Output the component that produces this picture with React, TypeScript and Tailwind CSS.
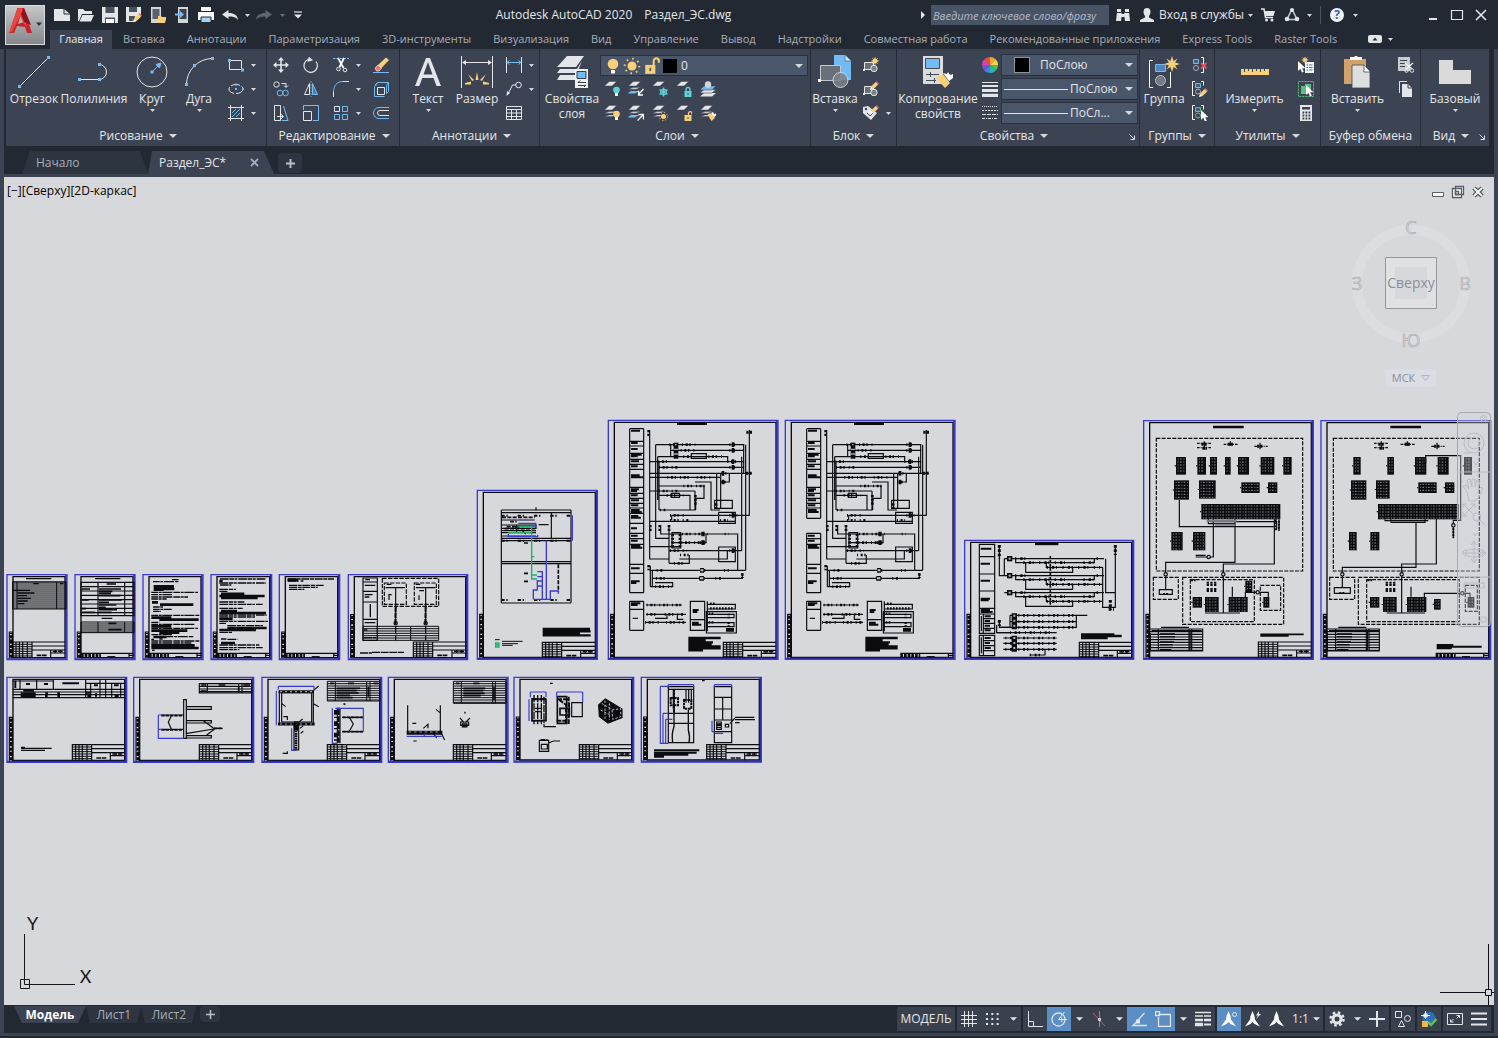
import React from 'react';

type Box = [number, number, number, number];

const W = '#e3e5e8';
const B = '#72bcf5';
const Y = '#f8d07a';

/* ---------- small building blocks ---------- */

const Icon: React.FC<{ size?: number; box?: number; children: React.ReactNode }> = ({ size = 16, box, children }) => (
  <svg width={size} height={size} viewBox={`0 0 ${box ?? size} ${box ?? size}`} fill="none" stroke={W} strokeWidth="1" className="shrink-0">
    {children}
  </svg>
);

const Caret: React.FC<{ big?: boolean; dim?: boolean }> = ({ big, dim }) => (
  <svg width={big ? 8 : 5} height={big ? 4 : 3} viewBox="0 0 8 4" preserveAspectRatio="none" className="shrink-0">
    <path d="M0 0h8L4 4z" fill={dim ? '#6c737e' : '#d5d8dc'} />
  </svg>
);

const BigButton: React.FC<{ icon: React.ReactNode; label: string; className: string; caret?: boolean }> = ({ icon, label, className, caret }) => (
  <button className={`flex flex-col items-center shrink-0 ${className}`}>
    <span className="h-[38px] flex items-center justify-center">{icon}</span>
    <span className="leading-[15px] text-center whitespace-pre">{label}</span>
    {caret && <span className="h-2 flex items-center"><Caret /></span>}
  </button>
);

const Tool: React.FC<{ label: string; caret?: boolean; children: React.ReactNode }> = ({ label, caret, children }) => (
  <button aria-label={label} className="h-6 flex items-center shrink-0">
    <span className="w-6 flex justify-center">{children}</span>
    {caret && <span className="w-2.5 flex justify-center"><Caret /></span>}
  </button>
);

const Panel: React.FC<{ title: string; className: string; caret?: boolean; corner?: boolean; children: React.ReactNode }> = ({ title, className, caret = true, corner, children }) => (
  <section className={`flex flex-col shrink-0 bg-[#3c4453] border-r border-[#252c37] ${className}`}>
    <div className="flex h-[79px] pt-1">{children}</div>
    <button className={`relative flex items-center justify-center gap-1.5 h-[18px] pb-0.5 leading-4 ${corner ? 'pr-2' : ''}`}>
      {title}
      {caret && <Caret big />}
      {corner && (
        <svg width="6" height="6" viewBox="0 0 6 6" fill="none" stroke="#d5d8dc" className="absolute right-1 top-1.5">
          <path d="M0.5 0.5L5 5M5.5 1.5v4h-4" />
        </svg>
      )}
    </button>
  </section>
);

/* ---------- ribbon icons ---------- */

const Burst: React.FC<{ x: number; y: number; r: number }> = ({ x, y, r }) => (
  <g transform={`translate(${x} ${y}) scale(${r / 8})`} fill={Y} stroke="none">
    <path d="M0-8L1.6-3 5.6-5.6 3-1.6 8 0 3 1.6 5.6 5.6 1.6 3 0 8-1.6 3-5.6 5.6-3 1.6-8 0-3-1.6-5.6-5.6-1.6-3z" />
  </g>
);

const Cursor: React.FC<{ x: number; y: number }> = ({ x, y }) => (
  <path transform={`translate(${x} ${y})`} d="M0 0v10l2.3-2.2L4 11.5l1.8-.8-1.6-3.5h3.2z" fill="#fff" stroke="none" />
);

const Pencil: React.FC<{ x: number; y: number }> = ({ x, y }) => (
  <g transform={`translate(${x} ${y})`} stroke="none">
    <path d="M0 9l1-3.4 2.6 2.5z" fill="#fff" />
    <path d="M1 5.6L5.6 1l2.5 2.6L3.6 8.1z" fill={Y} />
    <path d="M5.6 1l1-1 2.5 2.5-1 1.1z" fill="#e8605f" />
  </g>
);

const stack = (n: number) => {
  let d = '';
  for (let i = 0; i < n; i++) d += `M0.5 ${4.5 + i * 3}L4.5 ${i ? 3 + i * 3 : 0.5}H11L7 ${4.5 + i * 3}z`;
  return d;
};

type Extra = 'bulbOff' | 'arrowIn' | 'freeze' | 'lock' | 'hat' | 'bulb' | 'arrowOut' | 'sun' | 'unlock' | 'brush';

const LayerIcon: React.FC<{ kind: Extra }> = ({ kind }) => {
  const single = ['bulbOff', 'freeze', 'lock', 'unlock'].includes(kind);
  const blueBase = ['arrowIn', 'arrowOut'].includes(kind);
  return (
    <Icon>
      {kind === 'hat' ? (
        <g stroke="none">
          <path d="M0 15.500L4 12h12L12 15.500z" fill={W} />
          <path d="M0 12L4 8.500h12L12 12z" fill={W} stroke="#3c4453" strokeWidth=".6" />
          <path d="M0 9L4 5h12L12 9z" fill={B} stroke="#3c4453" strokeWidth=".6" />
          <circle cx="8" cy="3.500" r="3.200" fill="#d4d6d9" />
        </g>
      ) : (
        <>
          <path d={stack(single ? 1 : 3)} fill={W} stroke="#3c4453" strokeWidth=".4" transform="scale(1.15 1.1)" />
          {blueBase && <path d="M0 12L3 10h7l-3 2.500H0z" fill={B} stroke="none" />}
        </>
      )}
      {(kind === 'bulb' || kind === 'bulbOff') && (
        <g stroke="none">
          <circle cx="12.500" cy="9" r="3.300" fill={kind === 'bulb' ? Y : '#5fd3d6'} />
          <path d="M11 12h3v3h-3z" fill="#fff" />
        </g>
      )}
      {kind === 'arrowIn' && <path d="M15.500 8L10.500 13.500M10.500 9.500v4.500h4.500" stroke="#fff" strokeWidth="1.300" />}
      {kind === 'arrowOut' && <path d="M9.500 15.500L15 10M10.500 9.500h5v5" stroke="#fff" strokeWidth="1.300" />}
      {kind === 'freeze' && (
        <>
          <path d="M11.500 6.500v9M7.500 8.700l8 4.600M15.500 8.700l-8 4.600" stroke="#5fd3d6" strokeWidth="1.500" />
          <circle cx="11.500" cy="11" r="3" stroke="#5fd3d6" />
        </>
      )}
      {(kind === 'lock' || kind === 'unlock') && (
        <>
          <path d="M8.500 10h7v6h-7z" fill={kind === 'lock' ? '#5fd3d6' : Y} stroke="none" />
          <path d={kind === 'lock' ? 'M10 10V8.500a2 2 0 0 1 4 0V10' : 'M12.500 10V8a1.700 1.700 0 0 1 3.300 0v1.500'} stroke={kind === 'lock' ? '#5fd3d6' : Y} strokeWidth="1.300" />
          <path d="M12 12v2" stroke="#3c4453" />
        </>
      )}
      {kind === 'sun' && (
        <>
          <circle cx="11.500" cy="11.500" r="2.500" fill={Y} stroke="none" />
          <circle cx="11.500" cy="11.500" r="4" stroke={Y} strokeDasharray="1.200 1.940" />
        </>
      )}
      {kind === 'brush' && (
        <g stroke="none">
          <path d="M7.500 9.500l3-1.500 4.500 5-3.500 3z" fill={Y} />
          <path d="M11 8l2-1 1 2 2-.500v2l-2 2z" fill="#fff" />
        </g>
      )}
    </Icon>
  );
};

const DrawPanel = () => (
  <Panel title="Рисование" className="w-[261px] pl-1">
    <BigButton label="Отрезок" className="w-12" icon={
      <Icon size={32}><path d="M1.500 30.500L30.500 1.500" /><path d="M0 29h3v3H0zM29 0h3v3h-3z" fill={B} stroke="none" /></Icon>
    } />
    <BigButton label="Полилиния" className="w-[72px]" icon={
      <Icon size={32}><path d="M1 23.500h20a7 7 0 0 0 0-15" /><path d="M0 22h3v3H0zM20 22h3v3h-3zM20 7h3v3h-3z" fill={B} stroke="none" /></Icon>
    } />
    <BigButton label="Круг" className="w-11" caret icon={
      <Icon size={32}><circle cx="16" cy="16" r="15" /><path d="M16 16l7-7M25 7l-1.500 5L20 8.500z" stroke={B} fill={B} /><path d="M14.500 14.500h3v3h-3z" fill={B} stroke="none" /></Icon>
    } />
    <BigButton label="Дуга" className="w-[50px]" caret icon={
      <Icon size={32}><path d="M3.500 28.500A26 26 0 0 1 29 2.500" /><path d="M2 27h3v3H2zM10 8h3v3h-3zM28 1h3v3h-3z" fill={B} stroke="none" /></Icon>
    } />
    <div>
      <Tool label="Прямоугольник" caret><Icon><path d="M1.500 3.500h12v9h-12z" /><path d="M0 2h3v3H0zM13 11.500h3v3h-3z" fill={B} stroke="none" /></Icon></Tool>
      <Tool label="Эллипс" caret><Icon><ellipse cx="8" cy="8" rx="7" ry="4.500" strokeDasharray="9 2" /><path d="M7 7h2v2H7zM14 7h2v2h-2zM7 2.500h2v2H7z" fill={B} stroke="none" /></Icon></Tool>
      <Tool label="Штриховка" caret><Icon><path d="M2.500 0v16M13.500 0v16M0 2.500h16M0 13.500h16" /><path d="M4 8l4-4M4 12l8-8M8 12l4-4" stroke={B} /></Icon></Tool>
    </div>
  </Panel>
);

const EditPanel = () => (
  <Panel title="Редактирование" className="w-[133px] pl-0.5">
    <div className="flex gap-1.5">
      <div>
        <Tool label="Перенести"><Icon><path d="M8 2v12M2 8h12" strokeWidth="1.600" /><path d="M8 0l3 3.500H5zM8 16l3-3.500H5zM0 8l3.500-3v6zM16 8l-3.500-3v6z" fill={W} stroke="none" /></Icon></Tool>
        <Tool label="Копировать"><Icon><circle cx="3.500" cy="3.500" r="2.700" /><circle cx="7" cy="12" r="2.800" stroke={B} /><circle cx="12.500" cy="12" r="2.800" stroke={B} /><path d="M8.500 2.500h4.500V6M11 4.500l2 2 2-2" /></Icon></Tool>
        <Tool label="Растянуть"><Icon><path d="M1.500.5h6v15h-6z" /><path d="M10.500 1L15 15.500H8.500" stroke={B} /><path d="M4 11.500h6M8 9l2.500 2.500L8 14" /></Icon></Tool>
      </div>
      <div>
        <Tool label="Повернуть"><Icon><path d="M5 2.500a6.700 6.700 0 1 0 8 2" strokeWidth="1.200" /><path d="M5 0l5 2.500L5 5.500z" fill={W} stroke="none" transform="rotate(12 7 3)" /></Icon></Tool>
        <Tool label="Зеркало"><Icon><path d="M6.500 2.500v11h-5z" /><path d="M9.500 2.500v11h5z" stroke={B} fill="#4a7fac" /><path d="M8 0v16" stroke="#8792a1" strokeDasharray="2 1" /></Icon></Tool>
        <Tool label="Масштаб"><Icon><path d="M.5 6.500h8v9h-8z" /><path d="M.5 5V.5h15v15H10" stroke={B} /></Icon></Tool>
      </div>
      <div>
        <Tool label="Обрезать" caret><Icon><path d="M0 1.500h16" stroke={B} strokeDasharray="2.500 1" /><path d="M5 1l5.500 10M11 1L6.500 10" stroke="#fff" strokeWidth="1.800" /><circle cx="5.500" cy="12" r="1.800" /><circle cx="12" cy="13" r="1.800" /></Icon></Tool>
        <Tool label="Сопряжение" caret><Icon><path d="M10 .5h6M.5 11v5" /><path d="M.5 11C.5 4.500 4 .5 10 .5" stroke={B} /></Icon></Tool>
        <Tool label="Массив" caret><Icon><path d="M1.500 1.500h5v5h-5z" /><path d="M9.500 1.500h5v5h-5zM1.500 9.500h5v5h-5zM9.500 9.500h5v5h-5z" stroke={B} /></Icon></Tool>
      </div>
      <div>
        <Tool label="Стереть"><Icon><path d="M0 15.500h16" stroke={B} /><path d="M5 8l8-7.500 3 2.500-8 8.500z" fill={Y} stroke="none" /><path d="M2 11l3-3 3.500 3.500L6 14H3.500z" fill="#f0746c" stroke="#fff" strokeWidth=".6" /></Icon></Tool>
        <Tool label="Расчленить"><Icon><path d="M4.500 6.500h7v7h-7z" /><path d="M1.500 5.500L4.500 3M1.500 5.500v10h10M4.500 1.500h11v9l-2 2M4.500 1.500L2 4M13.500 4.500l2-3M13.500 4.500v8" stroke={B} /></Icon></Tool>
        <Tool label="Подобие"><Icon><path d="M16 2.500H6a5.500 5.500 0 0 0 0 11h10" stroke={B} /><path d="M16 5.500H7a2.500 2.500 0 0 0 0 5h9" /></Icon></Tool>
      </div>
    </div>
  </Panel>
);

const AnnotationPanel = () => (
  <Panel title="Аннотации" className="w-[140px] pl-1">
    <BigButton label="Текст" className="w-12" caret icon={
      <Icon size={32}><path d="M3 30L14 2h4l11 28h-4.500l-3-8H10.300l-3 8zM11.500 18.500h9L16 6z" fill={W} stroke="none" /></Icon>
    } />
    <BigButton label="Размер" className="w-[50px]" icon={
      <Icon size={32}>
        <path d="M.5 0v32M31.500 0v32M2 6.500h28" /><path d="M1 6.500L5 4v5zM31 6.500L27 4v5z" fill={W} stroke="none" />
        <path d="M4 27l6-1.500v3H4zM28 27l-6-1.500v3h6zM16 16l1.500 8h-3zM7 18l6 6-2 1zM25 18l-6 6 2 1z" fill={Y} stroke="none" />
      </Icon>
    } />
    <div>
      <Tool label="Линейный" caret><Icon><path d="M.5 0v16M15.500 0v16" /><path d="M1 5.500h14M3.500 3.500L1 5.500l2.500 2M12.500 3.500L15 5.500l-2.500 2" stroke={B} /></Icon></Tool>
      <Tool label="Выноска" caret><Icon><path d="M2 13l4.500-9H10" /><circle cx="12.500" cy="4" r="2.800" /><path d="M.5 15l.5-5 3 2z" fill={W} stroke="none" /></Icon></Tool>
      <Tool label="Таблица"><Icon><path d="M.5 1.500h15v13H.5zM.5 4.500h15M.5 8h15M.5 11.500h15M5.500 4v10.500M10.500 4v10.500" /></Icon></Tool>
    </div>
  </Panel>
);

const Bulb = () => (
  <Icon><circle cx="8" cy="6" r="5.300" fill={Y} stroke="none" /><path d="M6 12h4v3.500H6z" fill="#fff" stroke="none" /></Icon>
);

const row1: Extra[] = ['bulbOff', 'arrowIn', 'freeze', 'lock', 'hat'];
const row2: Extra[] = ['bulb', 'arrowOut', 'sun', 'unlock', 'brush'];

const LayersPanel = () => (
  <Panel title="Слои" className="w-[271px] pl-1">
    <BigButton label={'Свойства\nслоя'} className="w-14" icon={
      <Icon size={34}>
        <g fill={W} stroke="none">
          <path d="M2 12L12 1h17l-8 11zM2 18l3-4h17l5-8-5 12zM2 25l3-5h16v5z" />
        </g>
        <path d="M20 14h13v19H20z" fill="#f1f1f1" stroke="none" /><path d="M22 16.500h9v7h-9z" fill={B} stroke="#33404f" />
        <path d="M23 27.500h8M25 25.500l-2 2M31 30.500h-8M29 32l2-2" stroke="#33404f" />
      </Icon>
    } />
    <div className="flex-1">
      <div className="h-6 pt-0.5 pr-0.5">
        <div className="flex items-center gap-0.5 h-[21px] px-1 bg-[#4a5669] border border-[#2a323f]">
          <Bulb />
          <Icon size={18} box={16}><circle cx="8" cy="8" r="4" fill={Y} stroke="none" /><circle cx="8" cy="8" r="6.500" stroke={Y} strokeWidth="1.800" strokeDasharray="1.300 3.800" /></Icon>
          <Icon size={18} box={16}><path d="M2 7h9v8H2z" fill={Y} stroke="none" /><path d="M9.500 7V3.500a2.300 2.300 0 0 1 4.600 0V5" stroke={Y} strokeWidth="1.800" /><path d="M6.500 9.500v3" stroke="#4a5669" strokeWidth="1.500" /></Icon>
          <span className="w-3.5 h-3.5 bg-black" />
          <select aria-label="Слой" className="appearance-none bg-transparent flex-1 pl-0.5 outline-none text-[12px]"><option>0</option></select>
          <Caret big />
        </div>
      </div>
      <div className="flex">{row1.map((k) => <Tool key={k} label={k}><LayerIcon kind={k} /></Tool>)}</div>
      <div className="flex">{row2.map((k) => <Tool key={k} label={k}><LayerIcon kind={k} /></Tool>)}</div>
    </div>
  </Panel>
);

const MiniBlock = () => (
  <>
    <path d="M1.500 5.500h9v7h-9z" fill="#6a7079" /><circle cx="11" cy="11.500" r="3.200" fill="#7d828a" />
    <path d="M0 12h2v2H0z" fill={W} stroke="none" />
  </>
);

const BlockPanel = () => (
  <Panel title="Блок" className="w-[86px]">
    <BigButton label="Вставка" className="w-12" caret icon={
      <Icon size={34}>
        <path d="M16 0h11l6 6v19H16z" fill={B} stroke="none" /><path d="M27 0v6h6" fill="#cfe6fa" stroke="#3c4453" strokeWidth=".6" />
        <path d="M2.500 10.500h20v15h-20z" fill="#6a7079" stroke="#c3c6ca" /><circle cx="22.500" cy="25" r="7.500" fill="#7d828a" fillOpacity=".85" stroke="#d0d2d6" />
        <path d="M0 24h3v3H0z" fill="#fff" stroke="none" />
      </Icon>
    } />
    <div>
      <Tool label="Создать блок"><Icon><MiniBlock /><Burst x={12} y={4} r={4.5} /></Icon></Tool>
      <Tool label="Редактор блоков"><Icon><MiniBlock /><Pencil x={7} y={0} /></Icon></Tool>
      <Tool label="Атрибуты" caret><Icon><path d="M0 2l5-1 9 7-6 7-8-7z" fill={W} stroke="none" /><circle cx="3" cy="4" r="1.200" fill="#3c4453" stroke="none" /><path d="M4 8l3 3 3-3" stroke="#3c4453" /><Pencil x={7} y={0} /></Icon></Tool>
    </div>
  </Panel>
);

const wheel = ['#f5a623', '#f8d53a', '#49c05b', '#2ab7a9', '#3b82e6', '#7a4fe0', '#d648a8', '#ef4b4b'];

const ColorWheel = () => (
  <Icon>
    {wheel.map((c, i) => (
      <path key={c} d="M8 8L8 0A8 8 0 0 1 13.660 2.340z" fill={c} stroke="none" transform={`rotate(${i * 45} 8 8)`} />
    ))}
  </Icon>
);

const PropertiesPanel = () => (
  <Panel title="Свойства" className="w-[243px]" corner>
    <BigButton label={'Копирование\nсвойств'} className="w-[82px]" icon={
      <Icon size={32}>
        <path d="M1 0h20v28H1z" fill="#dcdcdc" stroke="none" /><path d="M3.500 2.500h14v10h-14z" fill={B} stroke="#444c59" />
        <path d="M4 18.500h13M4 24.500h10M8.500 16v5M12.500 22v5" stroke="#444c59" />
        <path d="M14 22l7-4 7 9-5 5z" fill={Y} stroke="none" /><path d="M21 17l4 1 1-2 2 3 3-1v4l-4 3z" fill="#fff" stroke="none" />
      </Icon>
    } />
    <div className="flex-1 pr-px">
      <div className="h-6 flex items-center">
        <span className="w-[22px] flex justify-center"><ColorWheel /></span>
        <div className="flex-1 min-w-0 flex items-center h-[22px] pl-3 pr-1 bg-[#4a5669] border border-[#2a323f]">
          <span className="w-4 h-4 shrink-0 bg-black border border-[#8d929b]" />
          <select aria-label="Цвет" className="appearance-none bg-transparent flex-1 min-w-0 pl-2.5 outline-none text-[12px]"><option>ПоСлою</option></select>
          <Caret big />
        </div>
      </div>
      <div className="h-6 flex items-center">
        <span className="w-[22px] flex justify-center"><Icon><path d="M0 1.500h16" /><path d="M0 5h16" strokeWidth="2" /><path d="M0 9.500h16" strokeWidth="3" /><path d="M0 14.500h16" strokeWidth="3.500" /></Icon></span>
        <div className="flex-1 min-w-0 flex items-center h-[22px] px-0.5 bg-[#4a5669] border border-[#2a323f]">
          <span className="w-16 h-px shrink-0 bg-[#e3e5e8]" />
          <select aria-label="Вес линий" className="appearance-none bg-transparent w-[54px] pl-0.5 outline-none text-[12px] mr-auto"><option>ПоСлою</option></select>
          <span className="pr-0.5"><Caret big /></span>
        </div>
      </div>
      <div className="h-6 flex items-center">
        <span className="w-[22px] flex justify-center"><Icon><path d="M0 1.500h16" strokeDasharray="1 1" /><path d="M0 5.500h16" strokeDasharray="2 1" /><path d="M0 9.500h16" strokeDasharray="4 1" /><path d="M0 13.500h16" strokeDasharray="3 1 1 1" /></Icon></span>
        <div className="flex-1 min-w-0 flex items-center h-[22px] px-0.5 bg-[#4a5669] border border-[#2a323f]">
          <span className="w-16 h-px shrink-0 bg-[#e3e5e8]" />
          <select aria-label="Тип линий" className="appearance-none bg-transparent w-[54px] pl-0.5 outline-none text-[12px] mr-auto"><option>ПоСл...</option></select>
          <span className="pr-0.5"><Caret big /></span>
        </div>
      </div>
    </div>
  </Panel>
);

const MiniGroup: React.FC<{ color?: string }> = ({ color = B }) => (
  <>
    <path d="M3 .5H.5v14H3M9 .5h2.500v4" stroke="#fff" />
    <path d="M3.500 2.500h5v4h-5z" stroke={color} fill="#44607c" /><circle cx="6" cy="10.500" r="2.500" stroke={color === B ? '#a9adb3' : color} />
  </>
);

const GroupsPanel = () => (
  <Panel title="Группы" className="w-[75px]">
    <BigButton label="Группа" className="w-12" icon={
      <Icon size={32}>
        <path d="M5 4.500H1.500v27H5M19 31.500h3.500V16" stroke="#fff" /><path d="M7.500 8.500h10v7h-10z" fill="#4f87bd" stroke={B} />
        <circle cx="12.500" cy="24.500" r="5" fill="#757b85" stroke="#b8bbc0" /><Burst x={24} y={8} r={8} />
      </Icon>
    } />
    <div>
      <Tool label="Разгруппировать"><Icon><path d="M9 .5h2.500v15H9" stroke="#fff" /><path d="M1.500 2.500h5v4h-5z" stroke={B} fill="#44607c" /><circle cx="4" cy="11" r="2.500" stroke="#a9adb3" /><path d="M9 6l5.500 5.500M14.500 6L9 11.500" stroke="#ee4e55" strokeWidth="2" /></Icon></Tool>
      <Tool label="Изменить группу"><Icon><MiniGroup /><Pencil x={7} y={7} /></Icon></Tool>
      <Tool label="Выбор групп"><Icon><MiniGroup color="#59c07d" /><Cursor x={9} y={5} /></Icon></Tool>
    </div>
  </Panel>
);

const UtilitiesPanel = () => (
  <Panel title="Утилиты" className="w-[106px]">
    <BigButton label="Измерить" className="w-[79px]" caret icon={
      <Icon size={32}><path d="M2 13h28v6H2z" fill={Y} stroke="none" /><path d="M5.500 13v3M9.500 13v2M13.500 13v3M17.500 13v2M21.500 13v3M25.500 13v2" stroke="#3c4453" /></Icon>
    } />
    <div>
      <Tool label="Быстрый выбор"><Icon><Cursor x={0} y={4} /><path d="M7 5h9v11H7z" fill="#f4f4f4" stroke="none" /><path d="M8.500 8h1.500M11 8h3.500M8.500 10.500h1.500M11 10.500h3.500M8.500 13h1.500M11 13h3.500" stroke="#2f80cf" /><Burst x={7} y={3} r={4} /></Icon></Tool>
      <Tool label="Выбрать все"><Icon><path d="M.5.5h15v15H.5z" stroke="#59c07d" strokeDasharray="2 1" /><path d="M3 5h4V3h6v6h-3v4H3z" fill="#59c07d" stroke="none" /><Cursor x={8} y={4} /></Icon></Tool>
      <Tool label="Калькулятор"><Icon><path d="M2 0h12v16H2z" fill={W} stroke="none" /><path d="M4 2h8v2.500H4z" fill="#3c4453" stroke="none" /><path d="M4.500 7.500h8M4.500 10.500h8M4.500 13.500h8" stroke="#3c4453" strokeWidth="2" strokeDasharray="1.800 1.200" /></Icon></Tool>
    </div>
  </Panel>
);

const ClipboardPanel = () => (
  <Panel title="Буфер обмена" className="w-[100px]" caret={false}>
    <BigButton label="Вставить" className="w-[73px]" caret icon={
      <Icon size={32}>
        <path d="M2 3h22v25H2z" fill="#d3a26b" stroke="none" /><path d="M8 1h4l1-1h2l1 1h4v3H8z" fill="#fff" stroke="none" />
        <path d="M10 9h12l6 7v16H10z" fill="#dedede" stroke="#3c4453" strokeWidth=".8" /><path d="M22 9v7h6" fill="#fff" stroke="#3c4453" strokeWidth=".8" />
      </Icon>
    } />
    <div>
      <Tool label="Вырезать"><Icon><path d="M0 0h12v14H0z" fill="#c9cbce" stroke="none" /><path d="M2 3.500h7M2 6.500h6M2 9.500h5" stroke="#3c4453" /><path d="M7 6l7 6M15 6l-7 6" stroke="#fff" strokeWidth="1.300" /><circle cx="8.500" cy="13.500" r="1.800" /><circle cx="14" cy="13.500" r="1.800" /></Icon></Tool>
      <Tool label="Копировать в буфер"><Icon><path d="M1.500 12V.5H9" /><path d="M4 3h6l4 4v9H4z" fill={W} stroke="none" /><path d="M10 3v4h4" stroke="#3c4453" /></Icon></Tool>
    </div>
  </Panel>
);

const ViewPanel = () => (
  <Panel title="Вид" className="w-[69px]" corner>
    <BigButton label="Базовый" className="w-[68px]" caret icon={
      <Icon size={32}><path d="M0 4h14v10h18v14H0z" fill="#dadada" stroke="none" /></Icon>
    } />
  </Panel>
);

/* ---------- header ---------- */

const QuickAccess = () => (
  <nav className="flex items-center">
    <Tool label="Создать"><Icon><path d="M0 2h10l6 5v7H0z" fill={W} stroke="none" /><path d="M10 2v5h6" stroke="#222933" /></Icon></Tool>
    <Tool label="Открыть"><Icon><path d="M0 2h5l2 2h7v3H4L1 14H0z" fill={W} stroke="none" /><path d="M4.500 8H16l-3 6.500H1.500z" fill={W} stroke="none" /></Icon></Tool>
    <Tool label="Сохранить"><Icon><path d="M0 0h16v16H0z" fill={W} stroke="none" /><path d="M3.500 0h9v6h-9zM3 10.500h10V16H3z" fill="#4b525d" stroke="none" /><path d="M4 12h8v4H4z" fill="#fff" stroke="none" /></Icon></Tool>
    <Tool label="Сохранить как"><Icon><path d="M0 0h15v9l-6 6H0z" fill={W} stroke="none" /><path d="M3 0h8v5H3zM3 9h6v5H3z" fill="#4b525d" stroke="none" /><Pencil x={7} y={6} /></Icon></Tool>
    <Tool label="Открыть с мобильного"><Icon><path d="M1 0h10v16H1z" fill="#d2d4d7" stroke="none" /><path d="M2.500 2h7v10h-7z" fill="#5a616c" stroke="none" /><path d="M8 9h3l1 1h4v2l-1 4H8z" fill={Y} stroke="none" /></Icon></Tool>
    <Tool label="Сохранить на мобильном"><Icon><path d="M4 0h10v16H4z" fill="#d2d4d7" stroke="none" /><path d="M5.500 2h7v10h-7z" fill="#39414d" stroke="none" /><path d="M1 6.500h5V4l4 3.500L6 11V8.500H1z" fill={B} stroke="none" /></Icon></Tool>
    <Tool label="Печать"><Icon><path d="M3 0h10v4H3zM0 5h16v8H0z" fill="#fff" stroke="none" /><path d="M3 10h10v5.500H3z" fill="#a5d3f5" stroke="#222933" /></Icon></Tool>
    <Tool label="Отменить" caret><Icon><path d="M0 7.500L6.500 3v3C12 6 15.500 8 16 13c-2-3-5-3.500-9.500-3.500V12z" fill={W} stroke="none" /></Icon></Tool>
    <button aria-label="Повторить" className="h-6 flex items-center">
      <span className="w-6 flex justify-center"><Icon><path d="M16 7.500L9.500 3v3C4 6 .5 8 0 13c2-3 5-3.500 9.500-3.500V12z" fill="#5e6570" stroke="none" /></Icon></span>
      <span className="w-3 flex justify-center"><Caret dim /></span>
    </button>
    <button aria-label="Настройка панели" className="w-5 flex justify-center"><Icon size={8}><path d="M0 1h8" strokeWidth="1.200" /><path d="M0 3.500h8L4 7.500z" fill={W} stroke="none" /></Icon></button>
  </nav>
);

const TitleRight = () => (
  <div className="flex items-center">
    <Icon size={8}><path d="M2 0l4 4-4 4z" fill={W} stroke="none" /></Icon>
    <input aria-label="Поиск" placeholder="Введите ключевое слово/фразу" className="ml-1 w-[178px] h-5 pl-0.5 bg-[#485466] italic outline-none text-[11px] placeholder:text-[#b3bac4]" />
    <button aria-label="Найти" className="w-6 ml-0.5 flex justify-center"><Icon size={14}><path d="M1 1h4v3l1 2h2l1-2V1h4v3l1 9H9l-.5-4h-3L5 13H0l1-9z" fill={W} stroke="none" /><path d="M1 4.500h4M9 4.500h4" stroke="#222933" /></Icon></button>
    <button className="flex items-center h-6">
      <span className="w-6 flex justify-center"><Icon size={14}><path d="M3.500 4a3.500 4 0 0 1 7 0c0 2-1 3-1.500 4v1.500L14 12v2H0v-2l5-2.500V8C4.500 7 3.500 6 3.500 4z" fill={W} stroke="none" /></Icon></span>
      <span className="w-[85px] text-left whitespace-nowrap">Вход в службы</span>
      <span className="w-3 flex justify-center"><Caret /></span>
    </button>
    <button aria-label="Магазин" className="w-6 flex justify-center"><Icon><path d="M1 2h3l1.500 8.500H13" strokeWidth="1.500" /><path d="M4.500 4H15l-1.500 5H5.500z" fill={W} stroke="none" /><circle cx="6.500" cy="13" r="1.500" fill={W} stroke="none" /><circle cx="12" cy="13" r="1.500" fill={W} stroke="none" /></Icon></button>
    <Tool label="Приложения" caret><Icon><path d="M7.500 3L3 12.500h10L8.500 3" strokeWidth="1.600" stroke="#b9c4dc" /><circle cx="8" cy="3" r="2" fill={W} stroke="none" /><circle cx="3" cy="12" r="2.300" fill={W} stroke="none" /><circle cx="13" cy="12" r="2.300" fill={W} stroke="none" /></Icon></Tool>
    <span className="w-px h-[18px] ml-1.5 mr-1.5 bg-[#4b5360]" />
    <button aria-label="Справка" className="h-6 flex items-center">
      <span className="w-5 flex justify-center"><span className="w-3.5 h-3.5 rounded-full bg-[#eef2fa] text-[#2f5fb8] font-bold text-[12px] leading-[14px] text-center">?</span></span>
      <span className="w-4 flex justify-center"><Caret /></span>
    </button>
    <div className="flex ml-[58px] pr-[5px]">
      <button aria-label="Свернуть" className="w-6 flex justify-center"><Icon size={14}><path d="M3 11h8" strokeWidth="2" /></Icon></button>
      <button aria-label="Развернуть" className="w-6 flex justify-center"><Icon size={14}><path d="M1.500 2.500h11v9h-11z" strokeWidth="1.200" /></Icon></button>
      <button aria-label="Закрыть" className="w-6 flex justify-center"><Icon size={14}><path d="M2 2l10 10M12 2L2 12" strokeWidth="1.600" /></Icon></button>
    </div>
  </div>
);

const TABS = ['Вставка', 'Аннотации', 'Параметризация', '3D-инструменты', 'Визуализация', 'Вид', 'Управление', 'Вывод', 'Надстройки', 'Совместная работа', 'Рекомендованные приложения', 'Express Tools', 'Raster Tools'];

const Header = () => (
  <header className="flex">
    <div className="w-[50px] shrink-0 pl-[5px] pt-[5px]">
      <button aria-label="Меню приложения" className="w-10 h-10 bg-linear-to-b from-[#c6c7c9] to-[#85878b] border border-[#d9dadc] block">
        <svg width="38" height="38" viewBox="1 1 38 38">
          <path d="M4 28L12.500 3h6.500L27 28h-5l-2-6-8-1-3 7z" fill="#c8232b" />
          <path d="M13 19l3-10 3 8z" fill="#b0b1b4" />
          <path d="M12.500 3L4 28l3-1 8-16 4 8 3 3-5-19z" fill="#e8473f" />
          <path d="M16 9l3 8 7 3-7-17z" fill="#8e1519" />
          <path d="M31 17.500h6l-3 3.500z" fill="#333" />
        </svg>
      </button>
    </div>
    <div className="flex-1 min-w-0">
      <div className="flex items-center h-[30px]">
        <QuickAccess />
        <h1 className="flex-1 flex justify-center gap-3 whitespace-nowrap"><span>Autodesk AutoCAD 2020</span><span>Раздел_ЭС.dwg</span></h1>
        <TitleRight />
      </div>
      <div className="flex items-start h-[19px] whitespace-nowrap text-[11px] leading-[18px] text-[#a8aeb8]">
        <button className="w-[62px] h-[19px] pb-px bg-[#3c4453] text-[#e8eaed]">Главная</button>
        {TABS.map((t) => <button key={t} className="px-[11px]">{t}</button>)}
        <button aria-label="Свернуть ленту" className="flex items-center gap-1.5 ml-5 h-[18px]">
          <Icon size={14}><rect x="0" y="3" width="14" height="8" rx="2" fill={W} stroke="none" /><path d="M4.500 8.500h5L7 5.500z" fill="#222933" stroke="none" /></Icon>
          <Caret />
        </button>
      </div>
    </div>
  </header>
);

/* ---------- drawing sheets, drawn in thirds of a pixel ---------- */

const INK = '#0b0b10';
const BLUE = '#3a39d6';

const Region: React.FC<{ x: number; y: number; children: React.ReactNode }> = ({ x, y, children }) => (
  <g transform={`translate(${x} ${y}) scale(0.33333)`} fill="none" stroke={INK} strokeWidth="3.500">{children}</g>
);

const Sheet: React.FC<{ b: Box; strip?: number }> = ({ b: [x, y, r, bt], strip = 78 }) => (
  <g>
    <path d={`M${x + 18} ${y + 6}H${r - 6}V${bt - 6}H${x + 18}z`} strokeWidth="4" />
    <path d={`M${r - 3} ${y}V${bt - 2}H${x}`} stroke="#2b2a9c" strokeWidth="5" />
    <path d={`M${x} ${y}H${r}V${bt}H${x}z`} stroke={BLUE} strokeWidth="4" />
    <path d={`M${x + 7} ${bt - 5}v-${strip}h9v${strip}`} />
    <path d={`M${x + 12} ${bt - 6}v-${strip - 4}`} strokeWidth="8" strokeDasharray="9 4 13 3" />
  </g>
);

const TitleBlock: React.FC<{ b: Box }> = ({ b: [x, y, r, bt] }) => (
  <g>
    <path d={`M${x} ${bt}V${y}H${r}M${x + 58} ${y}V${bt}`} />
    <path d={[1, 2, 3, 4, 5, 6].map((i) => `M${x} ${y + i * 7}h58`).join('')} strokeWidth="3" />
    <path d={[10, 20, 30, 44].map((i) => `M${x + i} ${y}V${bt}`).join('')} />
    <path d={`M${x + 58} ${y + 12}H${r}M${x + 58} ${y + 24}H${r}M${r - 44} ${y + 24}V${bt}M${r - 44} ${y + 33}H${r}M${r - 30} ${y + 24}v9M${r - 15} ${y + 24}v9`} />
    <path d={`M${x + 72} ${y + 40}h32M${r - 38} ${y + 28}h30`} strokeWidth="5" strokeDasharray="14 2" />
  </g>
);

const ThinBlock: React.FC<{ x: number; r: number; y: number }> = ({ x, r, y }) => (
  <g>
    <path d={`M${x} ${y}H${r}M${x + 58} ${y}v14M${r - 14} ${y}v14M${r - 14} ${y + 6}h14`} />
    <path d={`M${x} ${y + 7}h58`} strokeWidth="12" strokeDasharray="8 3" />
    <path d={`M${(x + r) / 2} ${y + 10}h24`} />
  </g>
);

const grid = (x: number, y: number, r: number, b: number, step: number, cols: number[]) => {
  let d = `M${x} ${y}H${r}V${b}H${x}z`;
  for (let i = y + step; i < b; i += step) d += `M${x} ${i}H${r}`;
  for (const c of cols) d += `M${c} ${y}V${b}`;
  return d;
};

const bars = (items: [number, number, number][]) => items.map(([x, y, w]) => `M${x} ${y}h${w}`).join('');

const Terminals: React.FC<{ items: Box[] }> = ({ items }) => (
  <>
    {items.map(([x, y, w, h]) => (
      <g key={`${x}-${y}`}>
        <rect x={x} y={y} width={w} height={h} fill={INK} stroke="none" />
        <path d={[...Array(Math.floor(h / 9))].map((_, i) => `M${x + 5} ${y + 6 + i * 9}h${w - 9}`).join('')} stroke="#a4a6ab" strokeWidth="2.500" strokeDasharray="3 4 5 5" />
        <path d={`M${x - 4} ${y + h / 2}h4`} />
      </g>
    ))}
  </>
);

const TextPages = () => (
  <Region x={0} y={560}>
    <Sheet b={[21, 44, 201, 299]} />
    <path d="M38 66H198M78 56h76" />
    <path d={grid(38, 66, 198, 147, 6, [51, 170])} strokeWidth="3" />
    <path d="M40 91h50M53 99h50M53 107h28M53 115h40M53 123h30M53 131h20M100 71h16M180 71h10" strokeWidth="4" />
    <TitleBlock b={[38, 246, 196, 294]} />

    <Sheet b={[225, 44, 405, 299]} />
    <path d={grid(243, 67, 402, 167, 13, [294, 374])} />
    <path d={grid(243, 186, 402, 218, 6, [294, 374])} strokeWidth="3" />
    <path d="M285 56h76M305 175h32" />
    <path d={bars([[297, 87, 66], [297, 94, 40], [297, 100, 36], [297, 107, 64], [297, 120, 68], [297, 127, 30], [297, 135, 52], [297, 142, 20], [297, 149, 54], [297, 157, 38], [246, 87, 24], [246, 120, 20], [246, 146, 12], [246, 157, 40], [320, 72, 28], [325, 190, 24], [325, 209, 40]])} strokeWidth="5" />
    <ThinBlock x={243} r={401} y={280} />

    <Sheet b={[429, 44, 609, 299]} />
    <path d="M516 59h22M459 65h76M454 97h140M454 104h62M454 111h110M454 117h46M459 141h30M459 148h56M459 154h24M454 166h144M454 187h24M454 193h130M454 205h140M454 224h62M478 237h10M454 238h8M500 230h80M454 243h144M454 249h120M456 271h8" strokeWidth="4" strokeDasharray="20 2 9 2 30 3" />
    <path d={bars([[461, 79, 61], [461, 84, 50], [461, 89, 30], [487, 87, 36], [456, 127, 18], [480, 134, 100], [454, 173, 60], [478, 179, 118], [454, 199, 60], [454, 212, 108], [478, 218, 60], [460, 231, 40], [454, 256, 130], [454, 264, 142]])} strokeWidth="8" />
    <ThinBlock x={447} r={605} y={280} />

    <Sheet b={[633, 44, 815, 299]} />
    <path d="M660 57h138M658 69h140M660 75h34M658 88h50M658 94h24M658 126h75M658 133h130M658 145h70M658 165h142M658 171h110M658 184h146M658 190h20M682 197h110M658 217h38M663 237h16M682 238h30M658 255h120M658 263h130M658 269h60" strokeWidth="4" strokeDasharray="26 2 14 2 8 3" />
    <path d={bars([[658, 63, 10], [663, 101, 70], [658, 108, 136], [663, 114, 110], [663, 153, 48], [658, 159, 140], [658, 177, 40], [682, 204, 118], [658, 210, 110], [663, 249, 42]])} strokeWidth="7" />
    <ThinBlock x={651} r={811} y={280} />

    <Sheet b={[838, 44, 1019, 299]} />
    <path d="M864 57h138M864 63h32M902 63h8M867 76h104M867 82h86M867 88h46" strokeDasharray="24 2 12 2" strokeWidth="4" />
    <path d="M862 60h32" strokeWidth="9" />
    <ThinBlock x={855} r={1015} y={280} />

    <Sheet b={[1045, 44, 1403, 299]} strip={130} />
    <path d="M1089 54h43v187h-43zM1089 66h43M1089 94h43M1089 126h43M1089 178h43" />
    <path d="M1096 59h14M1094 76h32M1094 104h24M1094 111h14M1111 132v40M1094 188h32" strokeWidth="4" />
    <path d="M1147 55h169v84h-169zM1153 69h66v64h-66zM1243 69h66v64h-66z" strokeDasharray="13 4" />
    <path d="M1157 83h58M1187 83v110M1248 83h58M1277 83v110M1165 104h10M1167 106v14M1258 92h14M1257 106v14M1160 73h14M1247 73h14" />
    <path d="M1187 139l-1 55M1277 139l-1 55" strokeWidth="6" strokeDasharray="16 3" />
    <circle cx="1187" cy="190" r="5" /><circle cx="1277" cy="190" r="5" />
    <path d={grid(1089, 199, 1316, 241, 7, [1132, 1232])} strokeWidth="3" />
    <path d="M1092 210h10M1092 233h36M1080 279h36M1116 277h96M1187 199v42M1277 199v42" strokeWidth="4" strokeDasharray="24 2" />
    <TitleBlock b={[1240, 246, 1400, 294]} />
  </Region>
);

const DetailSheets = () => (
  <Region x={0} y={560}>
    <Sheet b={[21, 352, 380, 607]} strip={130} />
    <path d="M38 388H375M38 396H375M38 404H375M38 413H375M60 358v30M110 358v30M160 358v30M257 358v55M38 363H160M257 370H375M272 370v43M300 358v55M317 358v55M335 370v43M362 370v43" />
    <path d="M46 362v22M62 400h45M62 408h45M78 372h12M132 372h12M187 370h50M70 392h32M135 408h8M172 408h8M258 398h14M262 408h10M282 376h12M342 376h14M344 408h12M136 400h8M172 400h8M288 400v10" strokeWidth="6" />
    <path d="M63 562h12M63 565h92M63 571h72" />
    <TitleBlock b={[217, 554, 375, 602]} />

    <Sheet b={[401, 352, 761, 607]} strip={130} />
    <path d={grid(598, 371, 755, 399, 8, [622, 716, 726])} />
    <path d="M604 375h14M656 375h20M730 375h20M602 393h18M716 378v18" strokeWidth="5" />
    <path d="M551 419h8v116h-8zM559 440h75v8h-75zM559 482h75v7h-75zM559 527h75v7h-75zM484 465h67M484 508h67M515 465l-10 22 10 22M557 521l84-14M610 482l30 22M620 525l24-18M640 505h28" />
    <path d="M484 467h67M484 510h67M642 505h26" strokeWidth="5" strokeDasharray="10 3" />
    <path d="M475 465v70H551M475 465h12M475 508h12" stroke={BLUE} />
    <TitleBlock b={[598, 554, 755, 602]} />

    <Sheet b={[786, 352, 1145, 607]} strip={130} />
    <path d={grid(982, 364, 1139, 423, 7, [1006, 1100, 1110])} strokeWidth="3" />
    <path d="M990 370h12M1044 370h18M1120 370h16M1010 385h70M1010 392h60M1010 399h66M1010 406h40M1010 413h48M1105 380v30" strokeWidth="5" />
    <path d="M838 392V492H940V392M845 398H935V486H845zM845 430l12 10M942 432l14 8M940 392l16-14M850 470h12v10M882 490v80h14v-80M898 485l10-8M900 505l10-8M902 520l8-6M848 580h14v-6" />
    <path d="M836 395H942M834 492H944" strokeWidth="9" />
    <path d="M840 395H938M840 492H938M889 490v78" stroke="#9c9da3" strokeDasharray="6 9" />
    <path d="M889 484v28" strokeWidth="14" />
    <path d="M888 512v58" strokeWidth="8" strokeDasharray="5 2" />
    <path d="M835 379H942M835 379v10M942 379v10M829 392V496M875 505v66h12" stroke={BLUE} />
    <path d="M1012 445v105M1020 445v105M1012 445h8M1027 472h62M1027 515h62M1048 472l12 20-12 22M1034 432v2" />
    <path d="M1007 450v95" strokeWidth="10" strokeDasharray="14 6 4 10" />
    <path d="M1016 448v100" strokeWidth="6" strokeDasharray="18 3" />
    <path d="M1027 472h62M1027 515h62M1030 432h6" strokeWidth="5" strokeDasharray="10 3" />
    <path d="M1006 445H1090V515M997 445V550H1012" stroke={BLUE} />
    <TitleBlock b={[982, 554, 1139, 602]} />

    <Sheet b={[1165, 352, 1524, 607]} strip={130} />
    <path d={grid(1360, 364, 1518, 430, 7, [1384, 1478, 1486])} strokeWidth="3" />
    <path d="M1368 370h10M1420 370h18M1390 385h66M1390 392h60M1390 400h64M1390 407h52M1482 380v40" strokeWidth="5" />
    <path d="M1223 436v84M1321 436v84M1308 448l12 10M1237 490h12M1270 505l14-12v12M1240 543h10M1324 520l10 20M1300 520l10 14" />
    <path d="M1220 518H1327" strokeWidth="12" />
    <path d="M1226 516H1320" stroke="#9c9da3" strokeDasharray="8 8" />
    <path d="M1220 529H1325M1273 520v9" stroke={BLUE} />
    <path d="M1382 486h24v10h-24zM1380 474l12 14M1410 474l-14 14" />
    <path d="M1388 492h12v8h-12zM1393 458h4" strokeWidth="5" />
    <TitleBlock b={[1360, 554, 1518, 602]} />
  </Region>
);

const PlanSheets = () => (
  <Region x={470} y={410}>
    <Sheet b={[22, 241, 382, 748]} strip={130} />
    <path d="M94 300H303M94 308H303M94 385H303M94 392H303M94 455H303M94 461H303M94 579H303M94 300V579M303 300V579M244 308V385M94 330h100M94 345h104v10H94M94 362h104M94 368h104M94 378h104M206 344h30M140 345v22M155 360l12 12M198 292v10" />
    <path d="M94 317H303M94 392H303M94 570H303" strokeWidth="6" strokeDasharray="10 5 4 30" />
    <path d="M265 463V545M162 399h15M162 490h14M162 514h14M96 322h98M110 350h40M104 356h90M120 335h20" strokeWidth="5" strokeDasharray="12 4" />
    <path d="M307 316v76M145 340h52v8h-52M115 372v8h88v-6M229 392V567M190 567V540h12v-30M202 485h15v82M202 500h15M202 513h15M202 528h15M241 567v-24h24v8M190 568h52" stroke={BLUE} strokeWidth="4" />
    <path d="M115 368h72M145 350h40V507h16M185 440h8M187 495h14" stroke="#1fae6a" strokeWidth="4" />
    <path d="M218 657H360M218 664H362M218 671H330M218 676H362" strokeWidth="7" />
    <path d="M75 689h14M96 694h62M96 701h48M96 706h32" strokeWidth="3" />
    <path d="M77 697v16M87 697v16M77 699h12M77 705h12M77 711h12" stroke="#1fae6a" strokeWidth="4" />
    <TitleBlock b={[217, 697, 376, 743]} />

    <Sheet b={[132, 802, 491, 1056]} strip={130} />
    <path d="M240 820h8M208 991h28v33h-28zM214 1003h18v14h-18zM236 999l14-6h20M222 942v8h36M305 878h32v42h-32zM298 878v42" />
    <path d="M186 868H228V932H186zM262 860h28v80h-28zM270 895h28v20h-28z" strokeWidth="5" />
    <path d="M192 855v88M203 855v88M214 855v88M184 866h44M184 932h44M195 895h28M195 905h20M222 860v80" strokeWidth="4" strokeDasharray="22 3" />
    <path d="M262 868h34M260 932h36M296 860v85M268 870l20 14v60M212 990h20" strokeWidth="6" strokeDasharray="14 3" />
    <path d="M181 846h47M181 846v16M228 846v16M177 868v65M260 846h78M260 846v14M338 846v30" stroke={BLUE} />
    <path d="M386 885l20-18 50 30v26l-42 16-26-20z" fill={INK} />
    <path d="M395 880l30 18M392 900l30 16M405 872v55M418 880v50M426 900l26-4v24l-24 8z" stroke="#b9bbc0" strokeWidth="3" strokeDasharray="7 5" />
    <TitleBlock b={[328, 1004, 486, 1051]} />

    <Sheet b={[514, 802, 874, 1056]} strip={130} />
    <path d="M595 830h76v168h-76zM595 838h76M595 910h76M595 940h76M610 838v60M648 838v40M656 838v40M664 838v40M733 830h52v168h-52zM733 862h52M733 897h52M758 862v68M733 930h52M740 936h14v22h-14zM733 965h52M766 943h10v8h-10zM780 940l15-16M795 922h58M795 929h60M795 938h14" />
    <path d="M602 864h22v22h-22zM642 870h22v26h-22zM612 838v75M696 811h8M744 940v14M750 940v14" strokeWidth="6" strokeDasharray="8 2" />
    <path d="M612 910v40q-8 20-4 48M655 900v60q6 20 2 38M612 838v110" strokeWidth="4" />
    <path d="M571 829h24M571 829V1000h24M579 910v90M587 928v70M579 910h16M587 928h20M594 824h77M594 824v10M671 824v8M733 824h52M733 824v10M785 824v10M726 932v33M726 965h8M733 970h26" stroke={BLUE} />
    <path d="M552 1021H688M552 1028H680M552 1034H655M552 1040h30" strokeWidth="6" />
    <TitleBlock b={[710, 1004, 868, 1051]} />
  </Region>
);

const Schematic: React.FC<{ full?: boolean }> = ({ full }) => {
  const edges = full
    ? [56, 94, 108, 130, 148, 163, 178, 232, 250, 265, 280, 294, 310, 340, 370, 386, 403, 463, 490, 548]
    : [56, 94, 108, 130, 148, 163, 178, 232, 250, 265, 280, 294, 325];
  const lower = full ? [] : [370, 386, 403, 463, 490, 548];
  const column = (list: number[]) =>
    list.length ? `M479 ${list[0]}V${list[list.length - 1]}M521 ${list[0]}V${list[list.length - 1]}` + list.map((y) => `M479 ${y}h42`).join('') : '';
  return (
    <g>
      <path d="M621 41h90" strokeWidth="8" />
      <path d={column(edges) + column(lower) + column([574, 598, 661])} />
      <path d={bars([[483, 62, 27], [483, 99, 20], [483, 117, 20], [483, 134, 32], [483, 139, 20], [483, 154, 24], [483, 169, 20], [483, 196, 26], [483, 202, 36], [483, 238, 24], [483, 243, 18], [483, 256, 20], [483, 271, 24], [483, 286, 22], [483, 300, 26], [483, 306, 32], [483, 377, 20], [483, 392, 20], [483, 408, 28], [483, 413, 34], [483, 475, 26], [483, 514, 26], [483, 519, 16], [483, 580, 28], [483, 585, 20]])} strokeWidth="6" />
      {full && <path d="M483 318h22M483 323h30M483 355h18" strokeWidth="6" />}
      <path d="M488 625h16" />
      <path d="M539 60V334H795M838 60V317M557 104H823M557 104V385H597M602 121H823M602 104V140M563 140H773V155M539 155H823M567 172H823M539 190H845M539 202H750M567 228H702V265H677V300M539 243H675M567 256H660V300M567 300H675V243M567 155V300M563 140V270M675 216H723V300H750M740 190V295M752 190V295M752 216H778V190M605 316H838M605 316V331M815 140V422M821 104V190M827 104V481M597 345V460M572 345V372H803V481M608 398H708V372M539 410H630M539 334V447H597M597 422H815M628 447H772V422M597 460H658V435M541 467V530M539 481H827M547 505H817V490M547 481V530M541 530H608V518H555" />
      <path d="M664 131h45v14h-45zM604 250h24v12h-24zM734 271h53v24h-53zM746 307h50v33h-50zM746 411h50v44h-50zM606 368h26v46h-26z" />
      <path d="M618 98v48" strokeWidth="14" />
      <path d="M612 104h12M612 118h12M612 132h12" stroke="#a9abb0" strokeWidth="4" />
      <path d="M536 60v20M569 345v20M597 345v20M541 345v20M536 465v16M608 372v44M630 372v44M676 255v32M817 490v14M738 280v14" strokeWidth="8" strokeDasharray="7 4" />
      <path d="M829 67h18M828 190h20" strokeWidth="9" strokeDasharray="7 3" />
      <path d="M598 104h78M778 104h22M632 121h44M778 121h18M640 140h24M715 140h46M565 155h26M772 155h26M567 172h60M778 172h18M592 202h66M680 202h48M755 190h14M750 216h20M640 228h66M567 243h60M590 256h50M570 300h16M600 316h46M600 331h56M778 316h24M750 331h24M636 372h78M764 372h12M634 398h72M690 398h16M600 422h50M778 422h22M630 435h28M612 460h36M560 481h20M690 481h16M762 481h14M558 505h30M688 505h16M736 505h20M556 530h50M530 585h106M530 613h30M584 613h60M525 637h46M588 637h60" strokeWidth="8" strokeDasharray="3 8 6 5 4 12" />
      <path d="M690 481h12M688 505h14M785 172h8M785 155h8M785 104h8M785 121h8M785 316h8M785 422h8M755 190h8M755 216h8M694 372h10M694 398h10" strokeWidth="14" />
      <path d="M692 481h8M690 505h10" stroke="#c6c8cd" strokeWidth="6" />
      <path d="M528 585H636M528 613H648M525 637H648M555 625h36v-12M640 628h-18v-15" />
      <path d="M661 574h43v87h-43zM661 629h43M709 605h90v64h-90zM712 583h84v14h-84M712 613h80v10h-80M712 638h80v12h-80M712 574v90" />
      <path d="M720 581h14M720 595h70M716 611h18M716 637h18M776 611v14M776 637v14" strokeWidth="7" strokeDasharray="5 4" />
      <path d="M668 600h18M668 606h14M666 638h20M666 644h28M768 657h24M768 662h24" strokeWidth="6" />
      <path d="M655 684h97M655 690h52M655 697h74M655 703h70M655 709h97M655 715h97M655 721h44" strokeWidth="7" />
    </g>
  );
};

const SchematicSheets = () => (
  <>
    <Region x={470} y={410}>
      <Sheet b={[415, 31, 924, 748]} strip={130} />
      <Schematic full />
      <TitleBlock b={[760, 697, 918, 743]} />
    </Region>
    <Region x={647} y={410}>
      <Sheet b={[415, 31, 924, 748]} strip={130} />
      <Schematic />
      <ThinBlock x={760} r={918} y={730} />
    </Region>
    <Region x={780} y={410}>
      <Sheet b={[554, 391, 1061, 748]} strip={130} />
      <path d="M765 402h70" strokeWidth="7" />
      <path d="M598 403h46v209h-46zM598 440h46M598 492h46M598 543h46M598 595h46M598 612h46v58h-46zM610 612v58M610 626h34M610 640h34M610 655h34M598 676h46v61h-46zM610 676v61M610 692h34M610 707h34M610 722h34M604 618v46M604 682v48" />
      <path d={bars([[602, 416, 32], [602, 461, 28], [602, 512, 28], [602, 566, 28], [602, 571, 24], [602, 600, 28], [602, 606, 36], [614, 619, 18], [614, 633, 16], [614, 647, 16], [614, 661, 18], [614, 684, 18], [614, 699, 16], [614, 714, 18]])} strokeWidth="6" />
      {[446, 497, 548].map((y) => (
        <g key={y}>
          <path d={`M673 ${y}H972M707 ${y}v12H943v-12M799 ${y + 12}v14H968M737 ${y + 12}v29H878v-15`} />
          <path d={`M681 ${y}h16`} strokeWidth="16" />
          <path d={`M686 ${y}h6`} stroke="#b9bbc0" strokeWidth="6" />
          <path d={`M705 ${y}H750M950 ${y}h12M730 ${y + 12}H860M910 ${y + 12}h30M800 ${y + 26}H960`} strokeWidth="8" strokeDasharray="4 12 7 5 3 16" />
          <path d={`M811 ${y - 8}v50`} strokeWidth="5" strokeDasharray="8 4" />
        </g>
      ))}
      <path d="M658 405V497H673M673 446V497M1006 405V592H968V472M977 446V548H1006M658 630v22H690M690 616V652M650 645v23H690" />
      <path d="M658 405v40M1006 405v30M658 630v18M991 570v30M986 598h16" strokeWidth="9" strokeDasharray="8 5" />
      <path d="M690 616H922M690 635H890M660 652H890M650 668H830M670 684H830M670 700H830M670 718H830M748 735H795V718M889 616v38" />
      <path d="M715 616H885M715 635H885M715 652H885M690 668H810M715 684h111M715 700h111M715 718h111M750 735h44M676 684h20M676 700h20M676 718h20" strokeWidth="8" strokeDasharray="3 11 6 6 4 15" />
      <path d="M703 610v48M703 677v48" strokeWidth="16" />
      <path d="M703 614v42M703 681v42" stroke="#b0b2b8" strokeWidth="6" strokeDasharray="6 9" />
      <path d="M903 673h100M903 678h122M903 684h80" strokeWidth="7" />
      <TitleBlock b={[898, 697, 1056, 743]} />
    </Region>
  </>
);

const Plugs: React.FC<{ dx: number }> = ({ dx }) => (
  <g transform={`translate(${dx} 0)`}>
    <path d="M186 130h44M186 143h44M266 133h44M358 139h40" strokeDasharray="8 3 3 3" />
    <path d="M199 133h18M202 145h14M278 133h16M366 139h18" strokeWidth="9" strokeDasharray="7 2" />
    <path d="M208 124v24M286 124v14M375 128v20" />
  </g>
);

const TerminalSheets = () => (
  <Region x={1135} y={400}>
    <Sheet b={[26, 62, 535, 778]} strip={130} />
    <path d="M234 81h92M766 81h92" strokeWidth="7" />
    <path d="M64 115H503V513H64zM55 532h75v66H55zM143 532H446V673H143zM166 539H358V665H166zM376 556h61v75h-61z" strokeDasharray="12 4" />
    <Plugs dx={0} />
    <path d="M215 548h32M215 567h32M215 555h30M215 573h30" strokeWidth="6" strokeDasharray="7 4" />
    <path d="M133 299V380H418M235 358V471H182M182 466h30M300 358V487H92V567M418 358V492H265V639M220 358V371H300M225 365H425V390M210 639H315M331 591V577H400V591M292 560v30M432 358v32M73 569h39v14H73z" />
    <path d="M215 363h90M240 374h60" stroke="#777a82" strokeWidth="6" />
    <path d="M84 582h18M422 358v34M432 362v30M168 541h14" strokeWidth="6" strokeDasharray="6 3" />
    <g fill="#d6d8dc"><circle cx="221" cy="471" r="5" /><circle cx="92" cy="523" r="5" /><circle cx="265" cy="523" r="5" /><circle cx="368" cy="577" r="5" /></g>
    <Terminals items={[[123, 171, 30, 53], [187, 171, 26, 53], [225, 171, 21, 53], [270, 171, 17, 53], [309, 171, 33, 53], [377, 171, 41, 53], [445, 171, 25, 53], [117, 241, 45, 58], [192, 241, 50, 55], [319, 247, 55, 32], [399, 247, 28, 32], [199, 312, 237, 46], [109, 396, 34, 55], [174, 396, 37, 55], [173, 591, 28, 32], [210, 591, 41, 45], [281, 591, 57, 45], [385, 591, 18, 32], [331, 542, 21, 34]]} />
    <path d={grid(42, 687, 203, 753, 8, [70, 162, 170])} />
    <path d="M78 682h84M75 702h45M75 710h45M75 718h45M75 726h42M75 734h38M75 742h38M75 749h34M50 692h150M165 690v62M46 700v50" strokeWidth="4" />
    <path d="M376 703h130M376 708h85M376 703h30" strokeWidth="5" />
    <TitleBlock b={[370, 726, 529, 773]} />

    <Sheet b={[558, 62, 1067, 778]} strip={130} />
    <path d="M595 115H1033V513H595zM584 532h75v66h-75zM670 532H1033V673H670zM695 539H973V665H695zM991 556h36v78h-36z" strokeDasharray="12 4" />
    <Plugs dx={531} />
    <path d="M752 548h32M752 567h32M752 555h30M752 573h30" strokeWidth="6" strokeDasharray="7 4" />
    <path d="M872 190V167H977V361H955V415M750 358V362H880M768 358V367H870V358M843 367V502H622V563M904 358V492H800V639M755 639H870M868 591V580H1005V591M828 560v30M598 563h48v17h-48z" />
    <path d="M613 579h18M955 385v28M697 541h14" strokeWidth="6" strokeDasharray="6 3" />
    <g fill="#d6d8dc"><circle cx="622" cy="523" r="5" /><circle cx="800" cy="523" r="5" /><circle cx="955" cy="376" r="5" /><circle cx="982" cy="580" r="5" /></g>
    <Terminals items={[[655, 171, 22, 53], [757, 171, 20, 53], [840, 171, 34, 53], [908, 171, 33, 53], [987, 171, 24, 53], [648, 241, 46, 58], [723, 241, 41, 55], [850, 247, 55, 32], [930, 247, 28, 32], [729, 312, 242, 46], [642, 396, 23, 55], [706, 396, 27, 55], [705, 591, 28, 32], [744, 591, 41, 45], [816, 591, 58, 45], [897, 597, 20, 32], [998, 591, 20, 32]]} />
    <path d={grid(575, 687, 733, 753, 8, [602, 694, 702])} />
    <path d="M610 682h84M606 702h45M606 710h45M606 718h45M606 726h42M606 734h38M606 742h38M606 749h34M582 692h150M697 690v62M577 700v50" strokeWidth="4" />
    <path d="M905 735h50M905 740h135M905 745h45" strokeWidth="6" />
    <ThinBlock x={902} r={1060} y={760} />
  </Region>
);

/* ---------- model space ---------- */

const ViewCube = () => (
  <div className="absolute right-[23px] top-9 w-[120px] flex flex-col items-center">
    <svg width="120" height="140" viewBox="1351 213 120 140">
      <circle cx="1411" cy="284" r="54" fill="none" stroke="#dcdde1" strokeWidth="10" />
      <g fill="#d9dadd" stroke="#a6a9af" strokeWidth=".6" fontSize="18" textAnchor="middle">
        <text x="1411" y="234">С</text><text x="1411" y="347">Ю</text><text x="1357" y="290">З</text><text x="1465" y="290">В</text>
      </g>
      <path d="M1385.500 257.500h51v51h-51z" fill="#e0e1e2" stroke="#94979b" />
      <path d="M1395 267h32v32h-32z" fill="#d6d8dc" />
      <text x="1411" y="288" textAnchor="middle" fontSize="14" fill="#8b8f96">Сверху</text>
    </svg>
    <button className="flex items-center gap-1.5 h-[18px] mt-4 px-1.5 rounded bg-[#dbdde4] text-[11px] text-[#8b8f98]">
      МСК
      <svg width="9" height="6" viewBox="0 0 9 6" fill="none" stroke="#b5b8c0"><path d="M.5.5h8l-4 5z" /></svg>
    </button>
  </div>
);

const NavBar = () => (
  <div className="absolute right-[3px] top-[235px]">
    <svg width="34" height="215" viewBox="0 0 34 215" fill="none" stroke="#b9bcc2">
      <rect x=".5" y=".5" width="33" height="214" rx="4" fill="#d6d8dc" fillOpacity=".35" stroke="#a5a8ae" />
      <circle cx="26.500" cy="6.500" r="3" /><path d="M25 5l3 3M28 5l-3 3" />
      <circle cx="17" cy="31" r="10" /><circle cx="17" cy="31" r="6" /><path d="M7 41h6M17 50l2 3 2-3M0 60h34" />
      <path d="M10 80l-4-6 3-1 3 4-2-9 3-1 2 8V67h3v8l2-7 3 1-2 9 3-3 2 1-4 9-4 4h-6z" />
      <path d="M6 92l12 12M18 92L6 104M6 96v-4h4M14 92h4v4M6 100v4h4" /><circle cx="20" cy="105" r="4" /><path d="M23 108l5 5M16 121l2 3 2-3" />
      <path d="M17 130v20M14 133l3-4 3 4M14 147l3 4 3-4M6 141h22M9 137l-4 4 4 4M25 137l4 4-4 4" /><ellipse cx="17" cy="141" rx="9" ry="4" />
      <path d="M7 171h20v5H7zM0 165h34" /><path d="M24 205h5v5h-5z" />
    </svg>
  </div>
);

const Canvas = () => (
  <main className="relative flex-1 bg-[#d6d8dc] overflow-hidden text-black">
    <svg className="absolute inset-0 w-full h-full">
      <g transform="translate(-4 -177)">
        <TextPages />
        <DetailSheets />
        <PlanSheets />
        <SchematicSheets />
        <TerminalSheets />
      </g>
    </svg>
    <p className="absolute left-[3px] top-1.5 leading-4">[−][Сверху][2D-каркас]</p>
    <div className="absolute right-2 top-[7px] flex gap-1">
      <button aria-label="Свернуть вид"><Icon><path d="M2.500 8.500h11v4h-11z" fill="#fff" stroke="#5a5d63" /></Icon></button>
      <button aria-label="Восстановить вид"><Icon><path d="M5.500 2.500h8v8h-8zM2.500 4.500h9v9h-9z" fill="#fff" stroke="#5a5d63" strokeWidth="1.300" /><path d="M5.500 7.500h3v3h-3z" stroke="#5a5d63" strokeWidth="1.500" /></Icon></button>
      <button aria-label="Закрыть вид"><Icon><path d="M4 4l8 8M12 4l-8 8" stroke="#4d5056" strokeWidth="4.500" /><path d="M4 4l8 8M12 4l-8 8" stroke="#fff" strokeWidth="1.800" /></Icon></button>
    </div>
    <ViewCube />
    <NavBar />
    <svg width="90" height="80" viewBox="16 912 90 80" fill="none" stroke="#17181c" className="absolute left-3 bottom-[13px]">
      <path d="M24.500 934v50.500H75M20.500 979.500h9v9h-9z" />
      <g fill="#17181c" stroke="none" fontSize="18" textAnchor="middle" className="font-['Lato',sans-serif]"><text x="32.500" y="930">Y</text><text x="85.500" y="983">X</text></g>
    </svg>
    <svg width="54" height="62" fill="none" stroke="#101114" className="absolute right-0 bottom-0">
      <path d="M0 49.500h45M48.500 1v45M48.500 53v9M52 49.500h2M45.500 46.500h6v6h-6z" />
    </svg>
  </main>
);

/* ---------- bottom bar ---------- */

const Status: React.FC<{ label: string; on?: boolean; children: React.ReactNode }> = ({ label, on, children }) => (
  <button aria-label={label} className={`w-6 h-6 flex items-center justify-center ${on ? 'bg-[#5b8ec4]' : 'bg-[#39414f]'}`}>{children}</button>
);

const Drop: React.FC = () => (
  <button aria-label="Параметры" className="w-4 h-6 flex items-center justify-center bg-[#39414f]">
    <svg width="7" height="4" viewBox="0 0 8 4"><path d="M0 0h8L4 4z" fill={W} /></svg>
  </button>
);

const Person = () => <path d="M7.500 0l2 5 .5 3.500 5 7-5.500-2.500-2-2-2 2L0 15.500l5-7L5.500 5z" fill="#fff" stroke="none" />;

const StatusBar = () => (
  <div className="flex gap-0.5 pr-[3px] pt-px">
    <button className="w-[58px] h-6 bg-[#39414f]">МОДЕЛЬ</button>
    <div className="flex">
      <Status label="Сетка"><Icon><path d="M3.500 0v16M7.500 0v16M11.500 0v16M0 4.500h16M0 8.500h16M0 12.500h16" /></Icon></Status>
      <Status label="Шаг"><Icon><path d="M1 3h15M1 8h15M1 13h15" strokeWidth="2" strokeDasharray="2 3.300" /></Icon></Status>
      <Drop />
    </div>
    <div className="flex">
      <Status label="Орто"><Icon><path d="M1.500 0v15.500H16M1.500 10.500h5v5" /></Icon></Status>
      <Status label="Полярное отслеживание" on><Icon><circle cx="7.500" cy="8.500" r="6.500" strokeWidth="1.300" /><path d="M7.500 8.500L13.500 1M7.500 8.500H16M9.500 6q2 1 1.500 5" /></Icon></Status>
      <Drop />
      <Status label="Изометрия"><Icon><path d="M2 2l12 13" stroke="#c75a68" /><path d="M8.500 0v16" stroke="#59a874" /><path d="M7.500 7.500h2v2h-2z" /></Icon></Status>
      <Drop />
      <Status label="Объектное отслеживание" on><Icon><path d="M13.500 2L2 14.500h14" strokeWidth="1.300" /><path d="M5 8.500h4v4H5z" fill={W} stroke="none" /></Icon></Status>
      <Status label="Объектная привязка" on><Icon><path d="M5 3.500h10.500v12h-12V6" strokeWidth="1.300" /><path d="M.5.5h4v4h-4z" strokeWidth="1.300" /></Icon></Status>
      <Drop />
      <Status label="Вес линий"><Icon><path d="M0 1.500h16M9 5h7M0 5h8" strokeWidth="1.300" /><path d="M0 9h8M9 9h7" strokeWidth="2.500" /><path d="M0 13.500h8" strokeWidth="3.500" /><path d="M9 13.500h7" strokeWidth="2" /></Icon></Status>
    </div>
    <div className="flex">
      <Status label="Видимость аннотаций" on><Icon><Person /><circle cx="13.500" cy="3.500" r="2" /></Icon></Status>
      <Status label="Автомасштаб"><Icon><Person /><path d="M14 0l-3 4.500h2L11 8l5-5h-2z" fill={W} stroke="none" /></Icon></Status>
      <Status label="Масштаб аннотаций"><Icon><Person /></Icon></Status>
      <button className="w-[34px] h-6 flex items-center justify-center gap-1 bg-[#39414f]">1:1<svg width="7" height="4" viewBox="0 0 8 4"><path d="M0 0h8L4 4z" fill={W} /></svg></button>
    </div>
    <div className="flex">
      <Status label="Рабочее пространство"><Icon><circle cx="8" cy="8" r="4" strokeWidth="3" /><circle cx="8" cy="8" r="6.500" strokeWidth="2.500" strokeDasharray="2.600 2.500" /></Icon></Status>
      <Drop />
      <Status label="Монитор аннотаций"><Icon><path d="M8 0v16M0 8h16" strokeWidth="2" /></Icon></Status>
    </div>
    <Status label="Изолировать объекты"><Icon><path d="M.5.5h6v6h-6z" /><circle cx="12.500" cy="7.500" r="3" /><path d="M6.500 9.500l3 6h-6z" /></Icon></Status>
    <Status label="Графика"><Icon><circle cx="8" cy="7" r="6.500" fill="#2f6db5" stroke="none" /><path d="M4.500 0v8M0 4.500h9M3 3h3v3H3z" stroke="#fff" /><path d="M1 10h6v6H1z" fill="#f3b73d" stroke="none" /><path d="M7 11l3 3 5.500-6" stroke="#63bd55" strokeWidth="2.500" /></Icon></Status>
    <div className="flex">
      <Status label="Полный экран"><Icon><path d="M.5 2.500h15v11H.5zM3.500 8.500v2.500h3M3.500 11l3-3M12.500 7V4.500h-3M12.500 4.500l-3 3" /></Icon></Status>
      <Status label="Настройка"><Icon><path d="M0 2.500h16M0 8h16M0 13.500h16" strokeWidth="2" /></Icon></Status>
    </div>
  </div>
);

const LAYOUTS = ['Лист1', 'Лист2'];

const App: React.FC = () => (
  <div className="min-h-screen flex flex-col bg-[#222933] font-['Open_Sans','Noto_Sans',sans-serif] text-[12px] text-[#e4e6e9]">
    <Header />
    <div className="flex-1 flex flex-col border-x-4 border-[#3c4453]">
      <div className="flex pl-0.5">
        <DrawPanel />
        <EditPanel />
        <AnnotationPanel />
        <LayersPanel />
        <BlockPanel />
        <PropertiesPanel />
        <GroupsPanel />
        <UtilitiesPanel />
        <ClipboardPanel />
        <ViewPanel />
      </div>
      <div className="flex items-end h-7 pl-[18px]">
        <button className="w-[126px] h-[23px] pl-3.5 text-left text-[#a8aeb8] bg-[#2d3541] [clip-path:polygon(0_100%,8px_0,118px_0,100%_100%)]">Начало</button>
        <div className="flex items-center justify-between w-[126px] h-[23px] pl-[11px] pr-[15px] bg-[#3c4453] [clip-path:polygon(0_100%,4px_0,116px_0,100%_100%)]">
          <button>Раздел_ЭС*</button>
          <button aria-label="Закрыть вкладку"><Icon size={9}><path d="M1 1l7 7M8 1L1 8" stroke="#a8aeb8" strokeWidth="1.800" /></Icon></button>
        </div>
        <button aria-label="Новая вкладка" className="w-6 h-5 ml-1 mb-px flex items-center justify-center bg-[#2d3541] rounded"><Icon size={9}><path d="M4.500 0v9M0 4.500h9" stroke="#b9bec6" strokeWidth="2" /></Icon></button>
      </div>
      <div className="h-[3px] bg-[#3c4453]" />
      <Canvas />
      <footer className="flex items-start justify-between h-7 pt-px">
        <div className="flex pl-2.5">
          <button className="w-[72px] h-[17px] leading-4 font-bold bg-[#3c4453] text-white [clip-path:polygon(0_0,100%_0,64px_100%,8px_100%)]">Модель</button>
          {LAYOUTS.map((l) => <button key={l} className="w-[55px] h-[17px] leading-4 pr-2.5 text-right text-[#a8aeb8] bg-[#2d3541] [clip-path:polygon(0_0,100%_0,51px_100%,4px_100%)]">{l}</button>)}
          <button aria-label="Новый лист" className="w-5 h-4 ml-1 flex items-center justify-center bg-[#2d3541] rounded"><Icon size={9}><path d="M4.500 0v9M0 4.500h9" stroke="#b9bec6" strokeWidth="1.600" /></Icon></button>
        </div>
        <StatusBar />
      </footer>
      <div className="h-[3px] bg-[#3c4453]" />
    </div>
    <div className="h-0.5 bg-[#222933]" />
  </div>
);

export default App;
